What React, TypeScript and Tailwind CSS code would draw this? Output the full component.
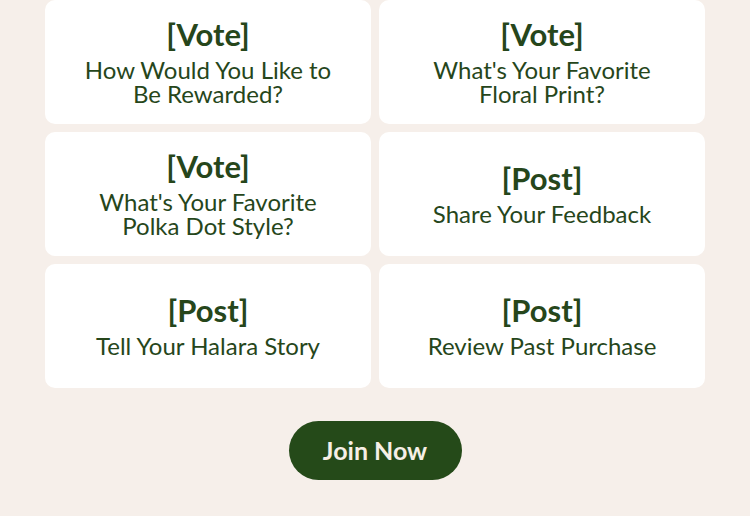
const cards = [
  { tag: '[Vote]', lines: ['How Would You Like to', 'Be Rewarded?'] },
  { tag: '[Vote]', lines: ["What's Your Favorite", 'Floral Print?'] },
  { tag: '[Vote]', lines: ["What's Your Favorite", 'Polka Dot Style?'] },
  { tag: '[Post]', lines: ['Share Your Feedback'] },
  { tag: '[Post]', lines: ['Tell Your Halara Story'] },
  { tag: '[Post]', lines: ['Review Past Purchase'] },
];

export default function App() {
  return (
    <div
      className="w-[750px] h-[516px] bg-[#f6efea] overflow-hidden"
      style={{ fontFamily: 'Lato, "Open Sans", sans-serif' }}
    >
      <div className="grid grid-cols-2 gap-2 px-[45px]">
        {cards.map((c, i) => (
          <div
            key={i}
            className="h-[124px] bg-white rounded-[10px] flex flex-col items-center justify-center text-center text-[#26461b]"
          >
            <div className="text-[31px] font-bold leading-[32px]">{c.tag}</div>
            <div className="text-[24px] leading-[24px] mt-[8px]">
              {c.lines.map((l, j) => (
                <div key={j}>{l}</div>
              ))}
            </div>
          </div>
        ))}
      </div>
      <div className="flex justify-center mt-[33px]">
        <button className="w-[173px] h-[59px] rounded-full bg-[#254a19] text-[#f6efe6] text-[25px] font-bold">
          Join Now
        </button>
      </div>
    </div>
  );
}
